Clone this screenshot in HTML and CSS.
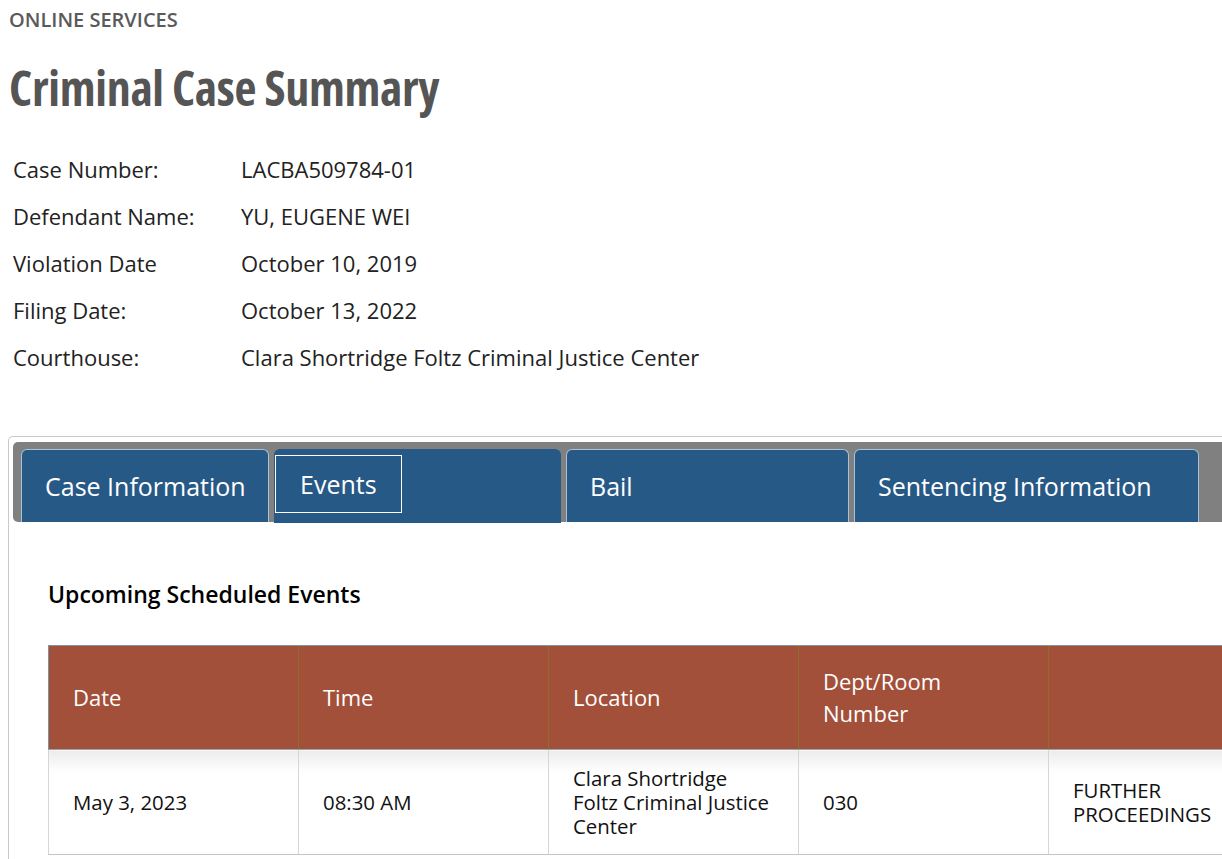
FILE: index.html
```html
<!DOCTYPE html>
<html lang="en">
<head>
<meta charset="utf-8">
<title>Criminal Case Summary</title>
<link rel="stylesheet" href="styles.css">
</head>
<body>
<header class="page-head">
  <div class="eyebrow">ONLINE SERVICES</div>
  <h1 class="title">Criminal Case Summary</h1>
</header>

<dl class="summary">
  <dt>Case Number:</dt><dd>LACBA509784-01</dd>
  <dt>Defendant Name:</dt><dd>YU, EUGENE WEI</dd>
  <dt>Violation Date</dt><dd>October 10, 2019</dd>
  <dt>Filing Date:</dt><dd>October 13, 2022</dd>
  <dt>Courthouse:</dt><dd>Clara Shortridge Foltz Criminal Justice Center</dd>
</dl>

<section class="tabbox">
  <nav class="tabbar">
    <div class="tab tab-case"><a class="tab-link" href="#">Case Information</a></div>
    <div class="tab tab-events active"><a class="tab-link focused" href="#">Events</a></div>
    <div class="tab tab-bail"><a class="tab-link" href="#">Bail</a></div>
    <div class="tab tab-sent"><a class="tab-link" href="#">Sentencing Information</a></div>
  </nav>
  <div class="panel">
    <h2 class="panel-title">Upcoming Scheduled Events</h2>
    <table class="events">
      <thead>
        <tr>
          <th>Date</th>
          <th>Time</th>
          <th>Location</th>
          <th>Dept/Room Number</th>
          <th></th>
        </tr>
      </thead>
      <tbody>
        <tr>
          <td>May 3, 2023</td>
          <td>08:30 AM</td>
          <td>Clara Shortridge Foltz Criminal Justice Center</td>
          <td>030</td>
          <td>FURTHER PROCEEDINGS</td>
        </tr>
      </tbody>
    </table>
  </div>
</section>
</body>
</html>
```

FILE: styles.css
```css
html, body {
  margin: 0;
  padding: 0;
  overflow: hidden;
  background: #fff;
}

body {
  font-family: "Open Sans", "Noto Sans", "Liberation Sans", sans-serif;
  color: #222;
  width: 1300px;
}

.page-head {
  padding: 8px 0 0 9px;
}

.eyebrow {
  font-size: 20px;
  line-height: 24px;
  font-weight: 600;
  color: #5a5a5a;
}

.title {
  margin: 26px 0 0 0;
  font-size: 48px;
  line-height: 60px;
  font-weight: 700;
  font-stretch: 75%;
  color: #555;
  letter-spacing: -0.3px;
}

.summary {
  display: grid;
  grid-template-columns: 228px auto;
  row-gap: 20px;
  margin: 38px 0 0 13px;
  font-size: 22px;
  line-height: 27px;
  color: #222;
}

.summary dt, .summary dd {
  margin: 0;
}

.tabbox {
  margin: 65px 0 0 8px;
  border: 1px solid #c9c9c9;
  border-right: none;
  border-bottom: none;
  border-radius: 5px 0 0 0;
  padding: 5px 0 0 4px;
  height: 600px;
}

.tabbar {
  display: flex;
  gap: 5px;
  background: #808080;
  border-radius: 5px 0 0 5px;
  padding: 7px 0 0 8px;
  height: 73px;
}

.tab {
  box-sizing: border-box;
  height: 73px;
  background: #275987;
  border: 1px solid #a9c0d6;
  border-bottom: none;
  border-radius: 6px 6px 0 0;
  display: flex;
  align-items: center;
}

.tab.active {
  border-color: #275987;
  height: 74px;
}

.tab-case { width: 248px; }
.tab-events { width: 287px; }
.tab-bail { width: 283px; }
.tab-sent { width: 345px; }

.tab-link {
  color: #fff;
  text-decoration: none;
  font-size: 25px;
  line-height: 30px;
  padding: 0 0 0 23px;
}

.tab-link.focused {
  padding: 14px 25px;
  outline: 1px solid #fff;
  outline-offset: -1px;
  margin-top: -5px;
}

.panel {
  padding: 0 0 0 35px;
}

.panel-title {
  margin: 57px 0 0 0;
  font-size: 23px;
  line-height: 30px;
  font-weight: 600;
  color: #000;
}

.events {
  margin-top: 36px;
  border-collapse: collapse;
  table-layout: fixed;
  width: 1250px;
}

.events th {
  box-sizing: border-box;
  width: 250px;
  background: #a3503a;
  color: #fff;
  font-weight: 400;
  font-size: 22px;
  line-height: 32px;
  text-align: left;
  padding: 18px 24px 20px;
  height: 104px;
  border-left: 1px solid #8c6e2a;
  border-top: 1px solid #7f93a3;
  border-bottom: 1px solid #9aa3aa;
}

.events th:first-child {
  border-left: 1px solid #7f93a3;
}

.events td {
  box-sizing: border-box;
  width: 250px;
  font-size: 20.4px;
  line-height: 24px;
  color: #111;
  padding: 16px 24px;
  height: 105px;
  border-left: 1px solid #d6d6d6;
  border-bottom: 1px solid #c4c4c4;
  background: linear-gradient(#ececec, #fff 22px);
}
```
